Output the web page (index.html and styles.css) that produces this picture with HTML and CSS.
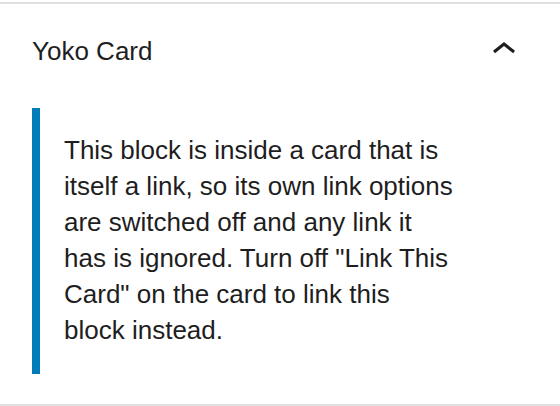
FILE: index.html
```html
<!DOCTYPE html>
<html lang="en">
<head>
  <meta charset="UTF-8">
  <meta name="viewport" content="width=device-width, initial-scale=1.0">
  <title>Yoko Card</title>
  <link rel="stylesheet" href="styles.css">
</head>
<body>
  <div class="panel">
    <h2 class="panel-title">
      <button type="button" class="panel-toggle" aria-expanded="true" aria-controls="card-panel">
        Yoko Card
        <svg class="panel-arrow" viewBox="0 0 24 24" width="48" height="48" aria-hidden="true">
          <path d="M6.5 12.4L12 8l5.5 4.4-.9 1.2L12 10l-4.5 3.6-1-1.2z"/>
        </svg>
      </button>
    </h2>
    <div class="panel-content" id="card-panel">
      <div class="notice">
        <p>This block is inside a card that is itself a link, so its own link options are switched off and any link it has is ignored. Turn off "Link This Card" on the card to link this block instead.</p>
      </div>
    </div>
  </div>

  <script>
    const toggle = document.querySelector('.panel-toggle');
    const content = document.getElementById('card-panel');

    toggle.addEventListener('click', function () {
      const open = toggle.getAttribute('aria-expanded') === 'true';
      toggle.setAttribute('aria-expanded', String(!open));
      content.hidden = open;
    });
  </script>
</body>
</html>
```

FILE: styles.css
```css
body {
  margin: 0;
  font-family: "Liberation Sans", Arial, sans-serif;
  font-size: 26px;
  color: #1e1e1e;
  background-color: #fff;
}
.panel {
  margin-top: 2px;
  border-top: 2px solid #e0e0e0;
  border-bottom: 2px solid #e0e0e0;
}
.panel-title {
  margin: 0;
  font-size: 26px;
}
.panel-toggle {
  display: flex;
  justify-content: space-between;
  align-items: flex-start;
  width: 100%;
  padding: 22px 32px 24px;
  border: none;
  background: none;
  color: inherit;
  font-family: inherit;
  font-size: 26px;
  font-weight: 400;
  line-height: 50px;
  text-align: left;
  cursor: pointer;
}
.panel-arrow {
  fill: currentColor;
}
.panel-toggle[aria-expanded="false"] .panel-arrow {
  transform: rotate(180deg);
}
.panel-content {
  padding: 8px 32px 30px;
}
.notice {
  padding: 24px 72px 26px 24px;
  border-left: 8px solid #007cba;
}
.notice p {
  margin: 0;
  line-height: 36px;
}
```
